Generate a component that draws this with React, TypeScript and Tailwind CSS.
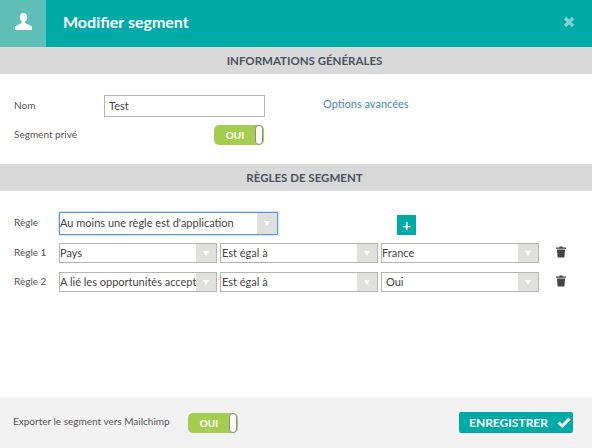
import React from "react";

const font = { fontFamily: '"Lato", "Liberation Sans", sans-serif' };

function Toggle() {
  return (
    <div className="flex h-5 w-[50px] items-center rounded-[5px] bg-[#a5ce50]">
      <span className="flex-1 pl-px text-center text-[10px] font-bold leading-none text-white">OUI</span>
      <span className="mr-px h-5 w-[8px] rounded-[4px] border border-[#8c8c8c] bg-white" />
    </div>
  );
}

function Select({ text, cls = "", focus = false }: { text: string; cls?: string; focus?: boolean }) {
  return (
    <div
      className={`flex shrink-0 items-stretch bg-white ${
        focus ? "h-[23px] w-[219px] border border-[#5b93d8] shadow-[0_0_2px_#7fb0e8]" : "h-5 w-[158px] border border-[#b5b5b5]"
      }`}
    >
      <span className={`flex-1 whitespace-nowrap text-[11px] text-[#444] ${focus ? "leading-[19px]" : "leading-[17px]"} ${cls}`}>{text}</span>
      <span className="flex w-5 shrink-0 items-center justify-center bg-[#e0e0dd]">
        <svg width="6" height="5" viewBox="0 0 6 5"><path d="M0 0h6L3 5z" fill="#fff" /></svg>
      </span>
    </div>
  );
}

function Trash() {
  return (
    <svg width="10" height="12" viewBox="0 0 11 12" className="ml-[14px] mb-[2px] shrink-0">
      <path d="M4 0h3l.4 1H11v1.400H0V1h3.600zM1 3.200h9L9.200 12H1.800z" fill="#444" />
    </svg>
  );
}

function Bar({ children }: { children: React.ReactNode }) {
  return (
    <div className="flex h-[27px] items-center justify-center bg-[#d9d9d9] pl-[17px] text-[11.5px] font-bold text-[#4a5260]">{children}</div>
  );
}

export default function App() {
  return (
    <div className="flex h-[448px] w-[592px] flex-col overflow-hidden bg-white" style={font}>
      <header className="flex h-[47px] items-center bg-[#00aaa7]">
        <div className="flex h-full w-[46px] items-center justify-center bg-[#5fbeb8] pb-[5px]">
          <svg width="17" height="17" viewBox="0 0 17 17">
            <path d="M8.500 0c2.400 0 3.700 1.800 3.700 4 0 1.900-.8 3.600-2 4.600v1.500L17 13.500V17H0v-3.500l6.800-3.400V8.600c-1.200-1-2-2.700-2-4.600 0-2.200 1.300-4 3.700-4z" fill="#fff" />
          </svg>
        </div>
        <h1 className="ml-[17px] flex-1 pb-[4px] text-[16px] font-bold text-white">Modifier segment</h1>
        <svg width="12" height="12" viewBox="0 0 12 12" className="mb-[3px] mr-[17px]">
          <path d="M2 2l8 8M10 2l-8 8" stroke="#7fd4d2" strokeWidth="3.200" />
        </svg>
      </header>

      <Bar>INFORMATIONS GÉNÉRALES</Bar>

      <section className="flex h-[90px] flex-col pl-[14px] pt-[21px] text-[10px] text-[#555]">
        <div className="flex h-[22px] items-center">
          <span className="w-[90px] pb-[2px]">Nom</span>
          <div className="h-[22px] w-[161px] border border-[#b5b5b5] pl-1 text-[11px] leading-5 text-[#444]">Test</div>
          <span className="ml-[58px] pb-[3px] text-[11px] text-[#4a86c8]">Options avancées</span>
        </div>
        <div className="mt-2 flex h-5 items-center">
          <span className="w-[200px] pb-[2px]">Segment privé</span>
          <Toggle />
        </div>
      </section>

      <Bar>RÈGLES DE SEGMENT</Bar>

      <section className="flex flex-1 flex-col pl-[14px] pt-[21px] text-[10px] text-[#555]">
        <div className="flex h-[23px] items-center">
          <span className="w-[45px] pb-[2px]">Règle</span>
          <Select text="Au moins une règle est d'application" focus />
          <button className="ml-[119px] mt-[3px] flex h-5 w-[19px] items-center justify-center bg-[#00aaa7] text-[15px] font-bold leading-none text-white">+</button>
        </div>
        <div className="mt-2 flex h-5 items-center gap-[3px]">
          <span className="-mr-[3px] w-[45px] pb-[2px]">Règle 1</span>
          <Select text="Pays" />
          <Select text="Est égal à" cls="pl-px" />
          <Select text="France" />
          <Trash />
        </div>
        <div className="mt-[9px] flex h-5 items-center gap-[3px]">
          <span className="-mr-[3px] w-[45px] pb-[2px]">Règle 2</span>
          <Select text="A lié les opportunités accept" />
          <Select text="Est égal à" cls="pl-px" />
          <Select text="Oui" cls="pl-[4px]" />
          <Trash />
        </div>
      </section>

      <footer className="flex h-[51px] items-center bg-[#f2f2f2] pl-[13px] pr-[19px]">
        <span className="w-[175px] pb-[2px] text-[10px] text-[#555]">Exporter le segment vers Mailchimp</span>
        <Toggle />
        <span className="flex-1" />
        <button className="flex h-[21px] w-[114px] items-center gap-[9px] rounded-[2px] bg-[#00aaa7] pl-[10px] text-[12px] font-bold text-white">
          ENREGISTRER
          <svg width="14" height="11" viewBox="0 0 14 11"><path d="M1.500 5.500l3.800 3.500L12.500 1.500" fill="none" stroke="#fff" strokeWidth="3" /></svg>
        </button>
      </footer>
    </div>
  );
}
